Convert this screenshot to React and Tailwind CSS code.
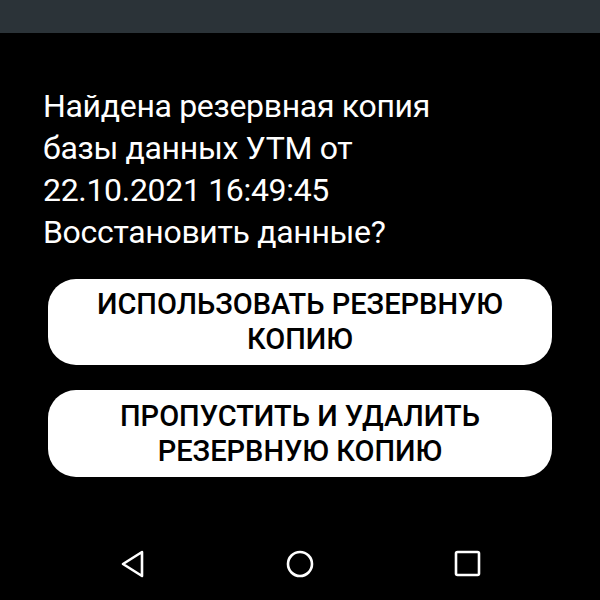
export default function App() {
  return (
    <div className="flex h-[600px] w-[600px] flex-col bg-black font-['Roboto','Liberation_Sans',sans-serif] text-white">
      {/* status bar */}
      <div className="h-[33px] shrink-0 bg-[#2b3338]" />

      {/* dialog body */}
      <div className="flex flex-1 flex-col px-[48px] pt-[52px]">
        <p className="-ml-[5px] text-[32px] leading-[42px] tracking-[-0.01em]">
          Найдена резервная копия
          <br />
          базы данных УТМ от
          <br />
          22.10.2021 16:49:45
          <br />
          Восстановить данные?
        </p>

        <div className="mt-[26px] flex flex-col gap-[25px]">
          <button
            type="button"
            className="flex h-[86px] w-full items-center justify-center rounded-[28px] bg-white px-4 text-center text-[29px] font-medium uppercase leading-[35px] text-black"
          >
            Использовать резервную
            <br />
            копию
          </button>
          <button
            type="button"
            className="flex h-[87px] w-full items-center justify-center rounded-[28px] bg-white px-4 text-center text-[29px] font-medium uppercase leading-[35px] text-black"
          >
            Пропустить и удалить
            <br />
            резервную копию
          </button>
        </div>
      </div>

      {/* navigation bar */}
      <div className="flex h-[70px] shrink-0 items-center justify-between px-[118px] pb-[2px]">
        <svg width="30" height="30" viewBox="0 0 30 30" fill="none" stroke="white" strokeWidth="2.6" strokeLinejoin="round">
          <path d="M24 3 L5 15 L24 27 Z" />
        </svg>
        <svg width="30" height="30" viewBox="0 0 30 30" fill="none" stroke="white" strokeWidth="2.6">
          <circle cx="15" cy="15" r="12" />
        </svg>
        <svg width="30" height="30" viewBox="0 0 30 30" fill="none" stroke="white" strokeWidth="2.6" strokeLinejoin="round">
          <rect x="4" y="3" width="23" height="23" rx="1.5" />
        </svg>
      </div>
    </div>
  );
}
